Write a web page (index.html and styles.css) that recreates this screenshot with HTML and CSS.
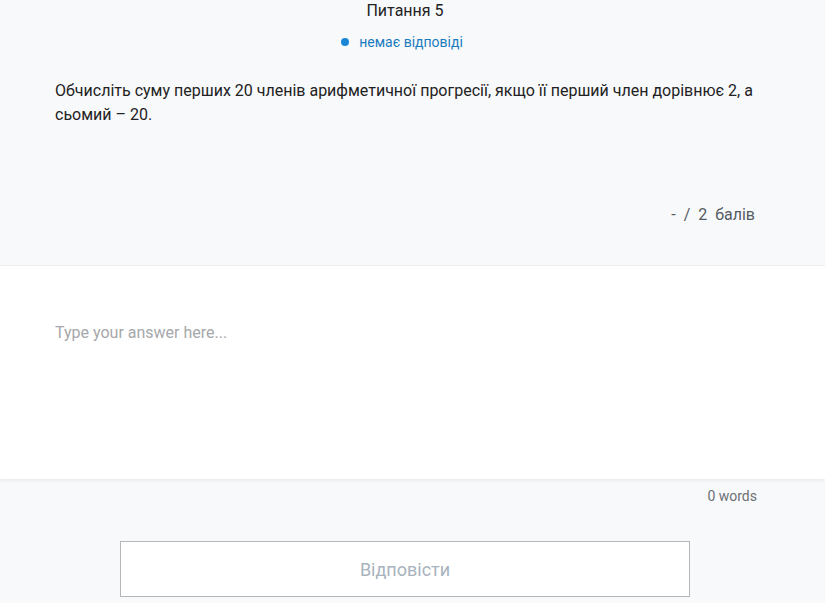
FILE: index.html
```html
<!DOCTYPE html>
<html lang="uk">
<head>
    <meta charset="UTF-8">
    <title>Питання 5</title>
    <link rel="stylesheet" href="styles.css">
</head>
<body>
<div class="question">
    <div class="q-head">
        <div class="q-title">Питання 5</div>
        <div class="q-status"><span class="dot"></span>немає відповіді</div>
    </div>
    <div class="q-text">Обчисліть суму перших 20 членів арифметичної прогресії, якщо її перший член дорівнює 2, а сьомий – 20.</div>
    <div class="q-score">-&nbsp; /&nbsp; 2&nbsp; балів</div>
</div>
<div class="answer">
    <div class="placeholder">Type your answer here...</div>
</div>
<div class="words">0 words</div>
<div class="actions">
    <button class="submit">Відповісти</button>
</div>
</body>
</html>
```
FILE: styles.css
```css
*{
    margin:0;
    padding:0;
    box-sizing:border-box;
}
body{
    background:#f8f9fb;
    font-family:Roboto, "Liberation Sans", sans-serif;
    color:#222;
}
.question{
    padding:0 70px 0 55px;
    height:266px;
    border-bottom:1px solid #eceef1;
}
.q-head{
    display:flex;
    flex-direction:column;
    align-items:center;
}
.q-title{
    font-size:16px;
    line-height:20px;
    padding-top:1px;
}
.q-status{
    display:flex;
    align-items:center;
    font-size:14px;
    line-height:20px;
    color:#1a7bbf;
    margin-top:11px;
    margin-right:6px;
}
.dot{
    width:8px;
    height:8px;
    border-radius:50%;
    background:#1a87d6;
    margin-right:10px;
}
.q-text{
    font-size:16px;
    line-height:24px;
    margin-top:27px;
}
.q-score{
    text-align:right;
    font-size:16px;
    color:#555b62;
    margin-top:78px;
}
.answer{
    background:#fff;
    height:213px;
    padding:55px 55px 0;
    box-shadow:0 2px 3px rgba(0,0,0,0.06);
}
.placeholder{
    font-size:16px;
    line-height:24px;
    color:#a6a8ab;
}
.words{
    text-align:right;
    font-size:14px;
    color:#6b7075;
    padding:9px 68px 0 0;
}
.actions{
    display:flex;
    justify-content:center;
    padding-top:37px;
    padding-right:15px;
}
.submit{
    width:570px;
    height:56px;
    background:#fff;
    border:1px solid #b4b7ba;
    font-family:inherit;
    font-size:18px;
    color:#a8b3bd;
}
```
